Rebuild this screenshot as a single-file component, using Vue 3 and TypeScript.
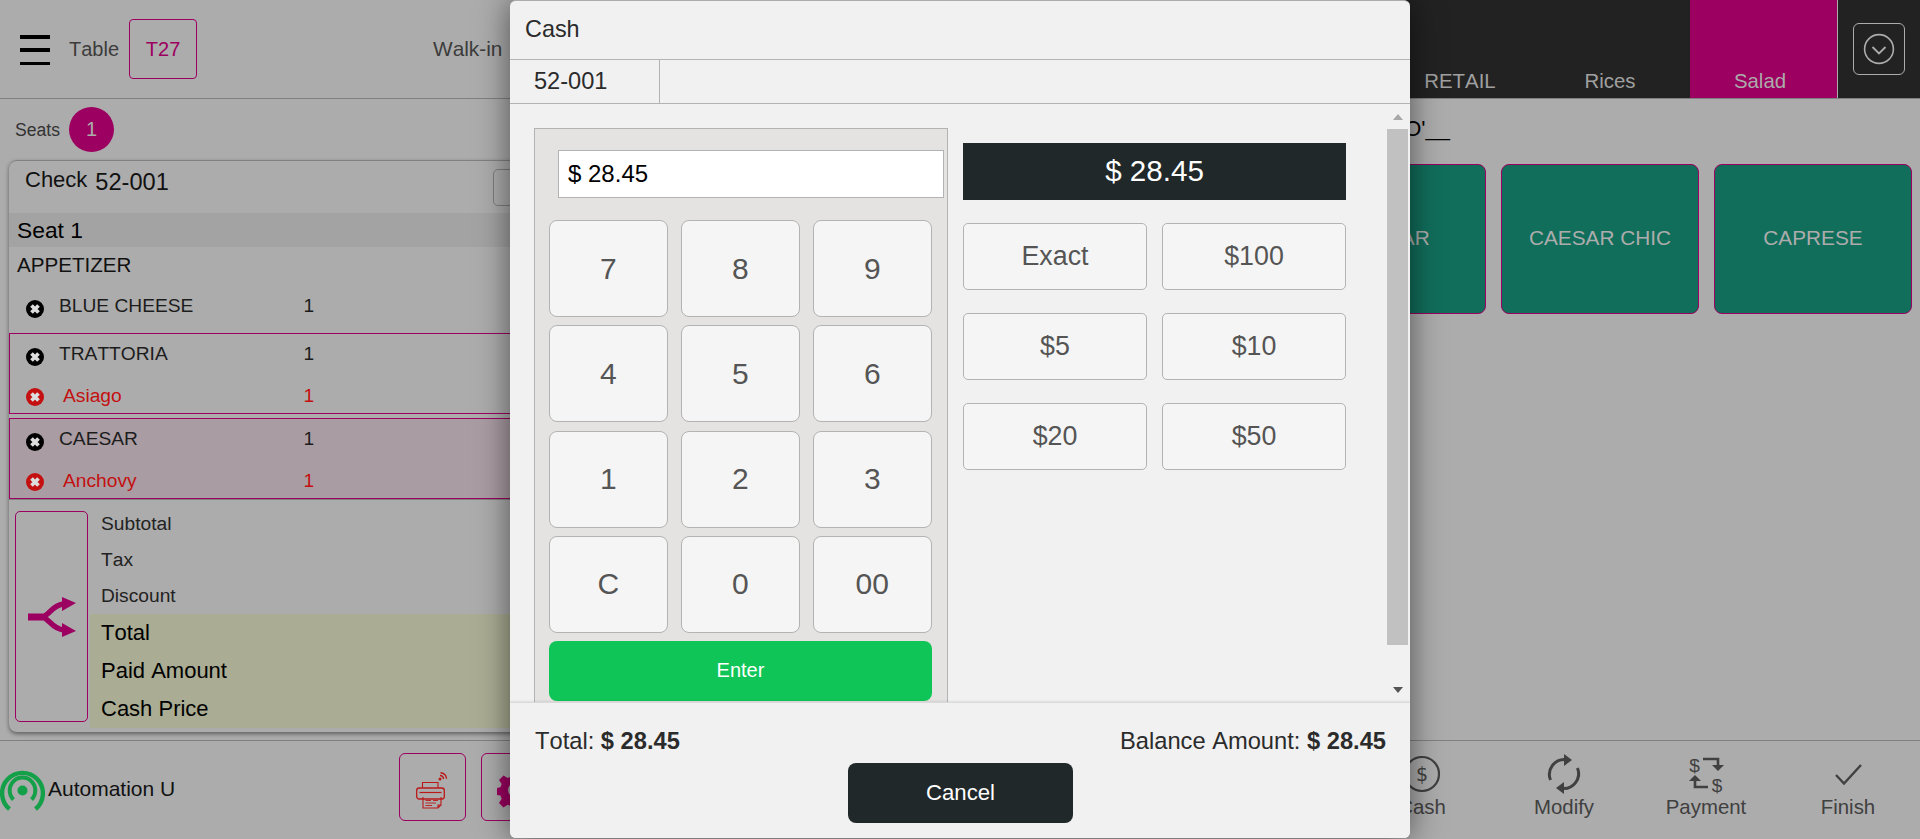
<template>
  <div class="page">
    <!-- top bar -->
    <header class="topbar">
      <div class="topbar-left">
        <div class="burger"><i></i><i></i><i></i></div>
        <span class="table-label">Table</span>
        <div class="table-box">T27</div>
        <span class="walkin">Walk-in</span>
      </div>
      <nav class="categories">
        <div v-for="c in categories" :key="c" :class="['category', { active: c === 'Salad' }]">{{ c }}</div>
        <div class="more">
          <button class="more-btn">
            <svg width="32" height="32" viewBox="0 0 32 32" fill="none" stroke="#acacac" stroke-width="1.6">
              <circle cx="16" cy="16" r="14.4" />
              <path d="M9.5 14 16 20.5 22.5 14" stroke-width="1.8" />
            </svg>
          </button>
        </div>
      </nav>
    </header>

    <div class="middle">
      <!-- check column -->
      <section class="check-col">
        <div class="seats">
          <span class="seats-label">Seats</span>
          <span class="seat-dot">1</span>
        </div>
        <div class="check-card">
          <div class="check-head">
            <span class="check-word">Check</span>
            <span class="check-no">52-001</span>
            <span class="check-btn"></span>
          </div>
          <div class="seat-bar">Seat 1</div>
          <div class="course">APPETIZER</div>
          <div class="item-row single">
            <svg class="rm" viewBox="0 0 18 18"><circle cx="9" cy="9" r="9" fill="#000" /><path d="M5.500 5.500l7 7M12.500 5.500l-7 7" stroke="#ddd" stroke-width="3.8" /></svg>
            <span>BLUE CHEESE</span>
            <span>1</span>
          </div>
          <div v-for="g in groups" :key="g.name" :class="['item-group', { selected: g.selected }]">
            <div class="item-row">
              <svg class="rm" viewBox="0 0 18 18"><circle cx="9" cy="9" r="9" fill="#000" /><path d="M5.500 5.500l7 7M12.500 5.500l-7 7" stroke="#ddd" stroke-width="3.8" /></svg>
              <span>{{ g.name }}</span>
              <span>1</span>
            </div>
            <div class="item-row mod">
              <svg class="rm" viewBox="0 0 18 18"><circle cx="9" cy="9" r="9" fill="#c41010" /><path d="M5.500 5.500l7 7M12.500 5.500l-7 7" stroke="#ddd" stroke-width="3.8" /></svg>
              <span>{{ g.mod }}</span>
              <span>1</span>
            </div>
          </div>
          <div class="totals">
            <button class="split-btn">
              <svg width="48" height="40" viewBox="0 0 48 40" fill="#9c0060">
                <path d="M0 20H15" fill="none" stroke="#9c0060" stroke-width="7" />
                <path d="M13 20C21 20 23 8 36 7M13 20C21 20 23 32 36 33" fill="none" stroke="#9c0060" stroke-width="5.5" />
                <path d="M34 0 48 6 34 14ZM34 26 48 34 34 40Z" />
              </svg>
            </button>
            <div class="total-lines">
              <div v-for="l in subLines" :key="l" class="sub-line">{{ l }}</div>
              <div class="grand">
                <div v-for="l in grandLines" :key="l" class="grand-line">{{ l }}</div>
              </div>
            </div>
          </div>
        </div>
      </section>

      <!-- menu column -->
      <section class="menu-col">
        <div class="crumb">'O'__</div>
        <div class="tiles">
          <div v-for="t in tiles" :key="t" class="tile">{{ t }}</div>
        </div>
      </section>
    </div>

    <!-- bottom bar -->
    <footer class="bottombar">
      <div class="store">
        <svg width="45" height="45" viewBox="0 0 45 45" fill="none" stroke="#14a049">
          <circle cx="22.5" cy="22.5" r="5" fill="#14a049" stroke="none" />
          <path d="M13.5 31.5A12.8 12.8 0 1 1 31.5 31.5" stroke-width="4" />
          <path d="M9.5 41A20.4 20.4 0 1 1 35.5 41" stroke-width="4.4" />
        </svg>
        <span class="store-name">Automation U</span>
      </div>
      <div class="tools">
        <button class="tool-btn">
          <svg width="34" height="37" viewBox="0 0 34 37" fill="none" stroke="#bb1818" stroke-width="1.1">
            <circle cx="24" cy="7" r="1.5" fill="#bb1818" stroke="none" />
            <path d="M24 3.500a3.500 3.500 0 0 1 3.500 3.500M24.500 .8a6 6 0 0 1 6 6" stroke-width="1.4" />
            <path d="M6.500 16V10.500H22V16" />
            <rect x="0.700" y="16" width="27.600" height="11" rx="2.500" stroke-width="1.3" />
            <path d="M3.500 20.500H25.500" stroke-width="1.2" />
            <path d="M7 25V36H22L25 33V25M22 36V33H25" />
            <path d="M9.500 28.500H15M17 28.500H22M9.500 31H20M9.500 33.500H16" stroke-width="0.9" />
          </svg>
        </button>
        <button class="tool-btn">
          <svg width="36" height="36" viewBox="0 0 36 36" fill="#9c0060">
            <path fill-rule="evenodd" d="M14.800 0h6.400l1 4.800 3.200 1.300 4.100-2.700 4.500 4.500-2.700 4.100 1.300 3.200 4.800 1v6.400l-4.800 1-1.300 3.200 2.700 4.100-4.500 4.500-4.100-2.700-3.200 1.300-1 4.800h-6.400l-1-4.800-3.200-1.300-4.100 2.700-4.500-4.500 2.700-4.100-1.300-3.200-4.800-1v-6.400l4.800-1 1.300-3.200-2.700-4.100 4.500-4.500 4.100 2.700 3.200-1.300ZM18 11a7 7 0 1 0 0 14 7 7 0 0 0 0-14Z" />
          </svg>
        </button>
      </div>
      <div class="actions">
        <div class="action">
          <svg width="38" height="38" viewBox="0 0 38 38" fill="none" stroke="#404040" stroke-width="2.2">
            <circle cx="19" cy="19" r="17" />
            <text x="19" y="26" text-anchor="middle" class="glyph" fill="#404040" stroke="none">$</text>
          </svg>
          <span>Cash</span>
        </div>
        <div class="action">
          <svg width="38" height="38" viewBox="0 0 38 38" fill="none" stroke="#404040" stroke-width="3">
            <path d="M5.500 25A15 15 0 0 1 21 4.500" />
            <path d="M32.500 13A15 15 0 0 1 17 33.500" />
            <path d="M19 -1 27 5 19 11ZM19 27 11 33 19 39Z" fill="#404040" stroke="none" />
          </svg>
          <span>Modify</span>
        </div>
        <div class="action">
          <svg width="38" height="38" viewBox="0 0 38 38" fill="none" stroke="#404040" stroke-width="2.6">
            <text x="7.500" y="17" text-anchor="middle" class="glyph thin" fill="#404040" stroke="none">$</text>
            <text x="30" y="36.500" text-anchor="middle" class="glyph thin" fill="#404040" stroke="none">$</text>
            <path d="M16 4H31V12" />
            <path d="M25 10H37L31 16Z" fill="#404040" stroke="none" />
            <path d="M21 32H8V24" />
            <path d="M2 26H14L8 20Z" fill="#404040" stroke="none" />
          </svg>
          <span>Payment</span>
        </div>
        <div class="action">
          <svg width="38" height="38" viewBox="0 0 38 38" fill="none" stroke="#404040" stroke-width="2.4">
            <path d="M7 20 15 28.500 32 10" />
          </svg>
          <span>Finish</span>
        </div>
      </div>
    </footer>

    <!-- cash modal -->
    <div class="modal">
      <div class="modal-title">Cash</div>
      <div class="modal-tabs"><div class="modal-tab">52-001</div></div>
      <div class="modal-body">
        <div class="keypad">
          <input class="amount-input" :value="amount" readonly />
          <div class="keys">
            <button v-for="k in keys" :key="k" class="key">{{ k }}</button>
          </div>
          <button class="enter">Enter</button>
        </div>
        <div class="quick">
          <div class="due">{{ amount }}</div>
          <div class="quick-grid">
            <button v-for="q in quick" :key="q" class="quick-btn">{{ q }}</button>
          </div>
        </div>
        <div class="scrollbar">
          <span class="arrow up"></span>
          <span class="thumb"></span>
          <span class="arrow down"></span>
        </div>
      </div>
      <div class="modal-foot">
        <div class="foot-line">
          <span>Total: <b>{{ amount }}</b></span>
          <span>Balance Amount: <b>{{ amount }}</b></span>
        </div>
        <button class="cancel">Cancel</button>
      </div>
    </div>
  </div>
</template>

<script setup lang="ts">
const amount = "$ 28.45";
const categories = ["RETAIL", "Rices", "Salad"];
const groups = [
  { name: "TRATTORIA", mod: "Asiago", selected: false },
  { name: "CAESAR", mod: "Anchovy", selected: true },
];
const subLines = ["Subtotal", "Tax", "Discount"];
const grandLines = ["Total", "Paid Amount", "Cash Price"];
const tiles = ["CAESAR", "CAESAR CHIC", "CAPRESE"];
const keys = ["7", "8", "9", "4", "5", "6", "1", "2", "3", "C", "0", "00"];
const quick = ["Exact", "$100", "$5", "$10", "$20", "$50"];
</script>

<style>
html,
body {
  margin: 0;
  overflow: hidden;
}
</style>

<style scoped>
.page {
  position: relative;
  width: 1920px;
  height: 839px;
  display: flex;
  flex-direction: column;
  overflow: hidden;
  background: #acacac;
  color: #000;
  font-family: "Liberation Sans", Arial, sans-serif;
  font-kerning: none;
}

button {
  font-family: inherit;
  font-kerning: none;
  padding: 0;
}

/* top bar */
.topbar {
  height: 98px;
  flex: none;
  display: flex;
  justify-content: space-between;
  border-bottom: 1px solid #808080;
}
.topbar-left {
  display: flex;
  align-items: center;
  padding-left: 20px;
  font-size: 20px;
  color: #3c3c3c;
}
.burger {
  width: 30px;
  height: 30px;
  display: flex;
  flex-direction: column;
  justify-content: space-between;
  margin-top: 2px;
}
.burger i {
  display: block;
  height: 3.5px;
  background: #000;
}
.table-label {
  margin-left: 19px;
}
.table-box {
  width: 68px;
  height: 60px;
  box-sizing: border-box;
  margin-left: 10px;
  display: flex;
  align-items: center;
  justify-content: center;
  border: 1px solid #9c0060;
  border-radius: 4px;
  color: #9c0060;
}
.walkin {
  margin-left: 236px;
  font-size: 20.8px;
}
.categories {
  display: flex;
  background: #222;
  padding-left: 290px;
  color: #a0a0a0;
  font-size: 20.4px;
}
.category {
  width: 150px;
  display: flex;
  align-items: flex-end;
  justify-content: center;
  padding-bottom: 5px;
  padding-right: 10px;
  box-sizing: border-box;
}
.category.active {
  width: 147px;
  padding-right: 7px;
  background: #9c0060;
  color: #acacac;
}
.more {
  width: 83px;
  border-left: 1px solid #acacac;
  box-sizing: border-box;
  padding: 23px 0 0 15px;
}
.more-btn {
  width: 52px;
  height: 52px;
  display: flex;
  align-items: center;
  justify-content: center;
  background: transparent;
  border: 1px solid #acacac;
  border-radius: 6px;
}

/* middle */
.middle {
  flex: 1;
  display: flex;
  border-bottom: 1px solid #808080;
  min-height: 0;
}
.check-col {
  width: 900px;
  flex: none;
}
.seats {
  height: 61px;
  box-sizing: border-box;
  padding: 7px 0 0 15px;
  display: flex;
  align-items: center;
  align-self: flex-start;
  font-size: 17.6px;
  color: #333;
}
.seats-label {
  margin-top: -6px;
}
.seat-dot {
  width: 45px;
  height: 45px;
  margin: -7px 0 0 9px;
  border-radius: 50%;
  background: #9c0060;
  color: #acacac;
  font-size: 20px;
  display: flex;
  align-items: center;
  justify-content: center;
}
.check-card {
  margin-left: 9px;
  height: 572px;
  box-sizing: border-box;
  border-top: 1px solid #808080;
  border-radius: 8px;
  box-shadow: 0 2px 4px rgba(0, 0, 0, 0.45);
  overflow: hidden;
}
.check-head {
  height: 52px;
  box-sizing: border-box;
  display: flex;
  padding: 6px 0 0 16px;
  font-size: 22px;
  color: #111;
  position: relative;
}
.check-no {
  margin: 2px 0 0 8px;
  font-size: 23.6px;
}
.check-btn {
  position: absolute;
  left: 484px;
  top: 8px;
  width: 60px;
  height: 35px;
  border: 1px solid #7d7d7d;
  border-radius: 5px;
}
.seat-bar {
  height: 34px;
  line-height: 34px;
  padding-left: 8px;
  font-size: 22.8px;
  background: #a3a3a3;
}
.course {
  height: 38px;
  line-height: 36px;
  padding-left: 8px;
  font-size: 20.6px;
  color: #111;
}
.item-row {
  display: grid;
  grid-template-columns: 33px 244.500px auto;
  align-items: center;
  height: 43px;
  padding-left: 17px;
  font-size: 19.2px;
  color: #1c1c1c;
}
.item-row.single {
  height: 48px;
  padding-bottom: 6px;
  box-sizing: border-box;
}
.rm {
  width: 18px;
  height: 18px;
  margin-top: 6px;
}
.item-group {
  box-sizing: border-box;
  height: 81px;
  border: 1px solid #9c0060;
  margin-bottom: 4px;
}
.item-group .item-row {
  box-sizing: border-box;
  padding-left: 16px;
  padding-bottom: 3px;
  height: 42px;
  grid-template-columns: 33px 244.500px auto;
}
.item-group .item-row.mod {
  height: 37px;
  padding-top: 3px;
  padding-bottom: 0;
  color: #c41010;
}
.item-group .item-row.mod .rm {
  margin-top: 2px;
}
.item-group .item-row.mod span:nth-of-type(1) {
  padding-left: 4px;
}
.item-group.selected {
  background: #a99ca3;
  margin-bottom: 0;
}
.totals {
  display: flex;
  border-top: 1px solid #808080;
  padding-left: 6px;
}
.split-btn {
  width: 73px;
  height: 211px;
  margin-top: 11px;
  flex: none;
  display: flex;
  align-items: center;
  justify-content: center;
  background: transparent;
  border: 1px solid #9c0060;
  border-radius: 5px;
}
.total-lines {
  flex: 1;
  margin: 6px 0 0 2px;
}
.sub-line {
  height: 36px;
  line-height: 36px;
  padding-left: 11px;
  font-size: 19.2px;
  color: #222;
}
.grand {
  height: 114px;
  background: #aaac93;
}
.grand-line {
  height: 38px;
  line-height: 38px;
  padding-left: 11px;
  font-size: 22px;
}

/* menu */
.menu-col {
  flex: 1;
}
.crumb {
  width: 550px;
  text-align: right;
  height: 65px;
  line-height: 60px;
  font-size: 22px;
}
.tiles {
  display: flex;
  justify-content: flex-end;
  gap: 15px;
  padding-right: 8px;
}
.tile {
  width: 198px;
  height: 150px;
  box-sizing: border-box;
  background: #116e5b;
  border: 1px solid #9c0060;
  border-radius: 8px;
  color: #acacac;
  font-size: 20.8px;
  text-align: center;
  line-height: 146px;
}

/* bottom bar */
.bottombar {
  height: 98px;
  flex: none;
  display: flex;
  align-items: center;
  box-sizing: border-box;
}
.store {
  display: flex;
  align-items: center;
  width: 399px;
  flex: none;
  font-size: 21px;
}
.store-name {
  margin: -3px 0 0 3px;
  color: #111;
}
.tools {
  display: flex;
  gap: 15px;
  margin-top: -6px;
}
.tool-btn {
  width: 67px;
  height: 68px;
  box-sizing: border-box;
  padding-top: 6px;
  display: flex;
  align-items: center;
  justify-content: center;
  background: transparent;
  border: 1px solid #9c0060;
  border-radius: 6px;
}
.actions {
  margin-left: auto;
  display: grid;
  grid-template-columns: repeat(4, 142px);
  padding-right: 1px;
  font-size: 20.4px;
  color: #404040;
}
.action {
  display: flex;
  flex-direction: column;
  align-items: center;
  margin-top: -6.500px;
}
.action svg {
  overflow: visible;
}
.action span {
  margin-top: 3.500px;
}
.glyph {
  font-family: "DejaVu Sans", sans-serif;
  font-size: 19px;
}
.glyph.thin {
  font-family: "Liberation Sans", sans-serif;
  font-size: 19px;
}

/* modal */
.modal {
  position: absolute;
  left: 510px;
  top: 0;
  width: 900px;
  height: 838px;
  display: flex;
  flex-direction: column;
  background: #f1f1f1;
  border-top: 1px solid #acacac;
  box-sizing: border-box;
  border-radius: 6px;
  box-shadow: 0 0 32px rgba(0, 0, 0, 0.55);
  overflow: hidden;
  color: #2b2b2b;
}
.modal-title {
  height: 59px;
  flex: none;
  box-sizing: border-box;
  padding-left: 15px;
  line-height: 57px;
  font-size: 23.4px;
  border-bottom: 1px solid #b3b3b3;
}
.modal-tabs {
  height: 44px;
  flex: none;
  box-sizing: border-box;
  border-bottom: 1px solid #b3b3b3;
}
.modal-tab {
  width: 150px;
  height: 43px;
  box-sizing: border-box;
  padding-left: 24px;
  line-height: 43px;
  font-size: 23.6px;
  border-right: 1px solid #b3b3b3;
}
.modal-body {
  flex: 1;
  min-height: 0;
  position: relative;
  display: flex;
  overflow: hidden;
}
.keypad {
  width: 414px;
  height: 700px;
  flex: none;
  box-sizing: border-box;
  margin: 24px 0 0 24px;
  padding: 21px 0 0 14px;
  background: #e4e3e1;
  border: 1px solid #b3b3b3;
}
.amount-input {
  display: block;
  width: 386px;
  height: 48px;
  box-sizing: border-box;
  margin-left: 9px;
  padding: 0 9px;
  background: #fff;
  border: 1px solid #b3b3b3;
  outline: none;
  font-family: inherit;
  font-size: 24px;
  color: #000;
}
.keys {
  display: grid;
  grid-template-columns: repeat(3, 118.500px);
  grid-auto-rows: 97px;
  column-gap: 13.500px;
  row-gap: 8.300px;
  margin-top: 22px;
}
.key {
  background: #f5f5f5;
  border: 1px solid #b3b3b3;
  border-radius: 8px;
  font-size: 30px;
  color: #555;
}
.enter {
  display: block;
  width: 383px;
  height: 60px;
  margin-top: 8px;
  background: #0fc557;
  border: none;
  border-radius: 8px;
  color: #fff;
  font-size: 20px;
}
.quick {
  width: 383px;
  margin: 39px 0 0 15px;
}
.due {
  height: 57px;
  line-height: 56px;
  background: #20282a;
  color: #fff;
  font-size: 29.6px;
  text-align: center;
}
.quick-grid {
  display: grid;
  grid-template-columns: 184px 184px;
  grid-auto-rows: 67px;
  column-gap: 15px;
  row-gap: 23px;
  margin-top: 23px;
}
.quick-btn {
  background: #f5f5f5;
  border: 1px solid #b3b3b3;
  border-radius: 5px;
  font-size: 26.8px;
  color: #555;
}
.scrollbar {
  position: absolute;
  right: 2px;
  top: 0;
  bottom: 0;
  width: 21px;
  display: flex;
  flex-direction: column;
  align-items: center;
}
.thumb {
  width: 21px;
  height: 516px;
  margin-top: 9px;
  background: #c1c1c1;
}
.arrow {
  width: 0;
  height: 0;
  border-left: 5px solid transparent;
  border-right: 5px solid transparent;
}
.arrow.up {
  margin-top: 10px;
  border-bottom: 6px solid #a8a8a8;
}
.arrow.down {
  margin-top: 42px;
  border-top: 6px solid #555;
}
.modal-foot {
  height: 136px;
  flex: none;
  box-sizing: border-box;
  padding: 24px 24px 0 25px;
  background: #f1f1f1;
  border-top: 1px solid #d9d9d9;
  box-shadow: 0 -1px 2px rgba(0, 0, 0, 0.08);
  display: flex;
  flex-direction: column;
  align-items: center;
  position: relative;
}
.foot-line {
  align-self: stretch;
  display: flex;
  justify-content: space-between;
  font-size: 23.7px;
  line-height: 28px;
}
.cancel {
  width: 225px;
  height: 60px;
  margin-top: 8px;
  background: #20282a;
  border: none;
  border-radius: 8px;
  color: #fff;
  font-size: 22.2px;
}
</style>
